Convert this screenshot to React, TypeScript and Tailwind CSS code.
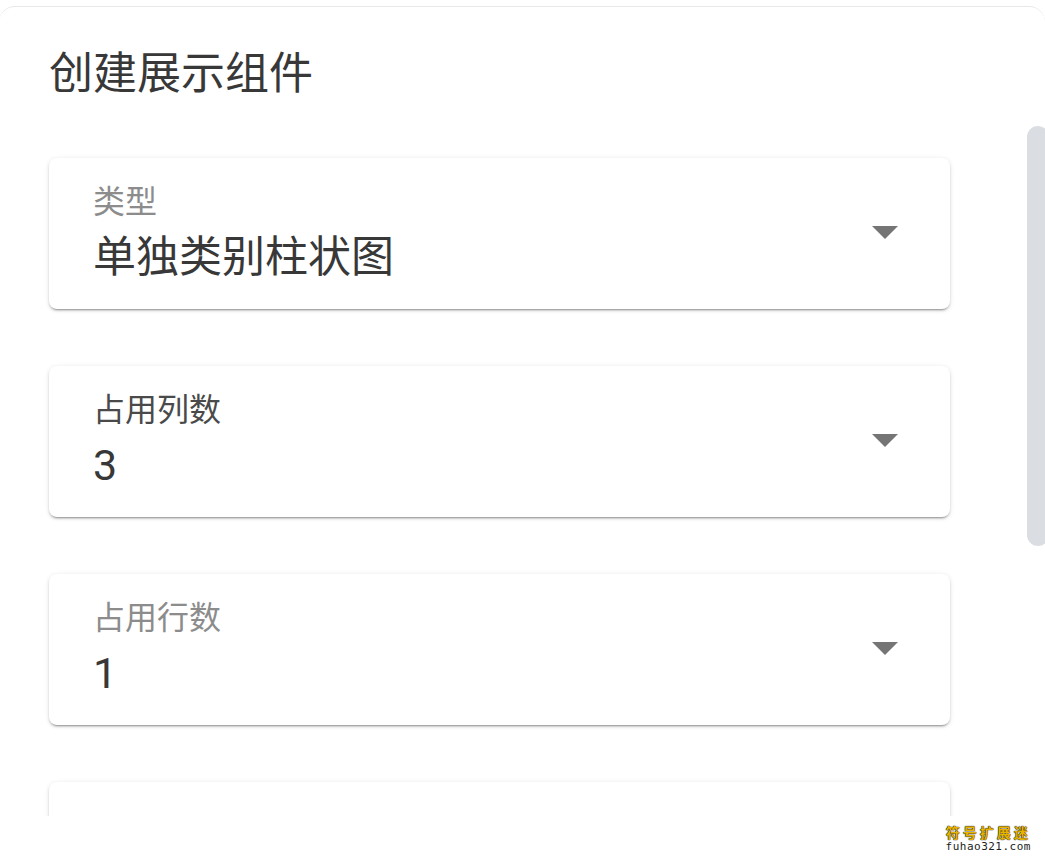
import React from 'react'

interface Field {
  label: string
  value: string
  active?: boolean
}

const fields: Field[] = [
  { label: '类型', value: '单独类别柱状图' },
  { label: '占用列数', value: '3', active: true },
  { label: '占用行数', value: '1' },
]

const font = { fontFamily: 'Roboto, "Noto Sans CJK SC", sans-serif' }

const cardShadow =
  'shadow-[0_3px_1px_-2px_rgba(0,0,0,0.2),0_2px_2px_0_rgba(0,0,0,0.14),0_1px_5px_0_rgba(0,0,0,0.12)]'

const Caret: React.FC = () => (
  <svg width="26" height="13" viewBox="0 0 26 13" className="shrink-0">
    <path d="M0 0 L26 0 L13 13 Z" fill="#757575" />
  </svg>
)

const SelectCard: React.FC<{ field: Field }> = ({ field }) => (
  <div className={`flex items-center justify-between rounded-[8px] bg-white pt-[28px] pb-[31px] pl-[44px] pr-[52px] ${cardShadow}`}>
    <div className="flex flex-col">
      <span className={`text-[32px] leading-[32px] ${field.active ? 'text-[#4a4a4a]' : 'text-[#8c8c8c]'}`}>
        {field.label}
      </span>
      <span className="mt-[18px] text-[43px] leading-[42px] text-[#383838]">{field.value}</span>
    </div>
    <Caret />
  </div>
)

const App: React.FC = () => {
  return (
    <div className="relative h-[863px] w-full overflow-hidden bg-white" style={font}>
      {/* Dialog */}
      <div className="mt-[6px] ml-[-1px] w-[1046px] rounded-t-[16px] border-t border-[#e8e8e8] bg-white">
        <h2 className="pt-[46px] pl-[50px] text-[44px] leading-[42px] font-normal text-[#383838]">创建展示组件</h2>

        {/* Scrollable body */}
        <div className="relative mt-[31px] h-[690px] overflow-hidden">
          <div className="ml-[50px] flex w-[901px] flex-col gap-[57px] pt-[32px]">
            {fields.map((f) => (
              <SelectCard key={f.label} field={f} />
            ))}
            <div className={`h-[150px] rounded-[8px] bg-white ${cardShadow}`} />
          </div>
          <div className="absolute top-0 right-[-4px] h-[420px] w-[22px] rounded-full bg-[#dadde1]" />
        </div>
      </div>

      {/* Watermark */}
      <div className="absolute right-[14px] bottom-[10px] flex flex-col items-center">
        <span
          className="text-[14px] leading-[16px] font-bold tracking-[3px] text-[#e8b400]"
          style={{ textShadow: '0 0 1px #000, 0 0 1px #000' }}
        >
          符号扩展迷
        </span>
        <span className="text-[11px] leading-[12px] tracking-[0.5px] text-[#222]" style={{ fontFamily: '"DejaVu Sans Mono", monospace' }}>
          fuhao321.com
        </span>
      </div>
    </div>
  )
}

export default App
